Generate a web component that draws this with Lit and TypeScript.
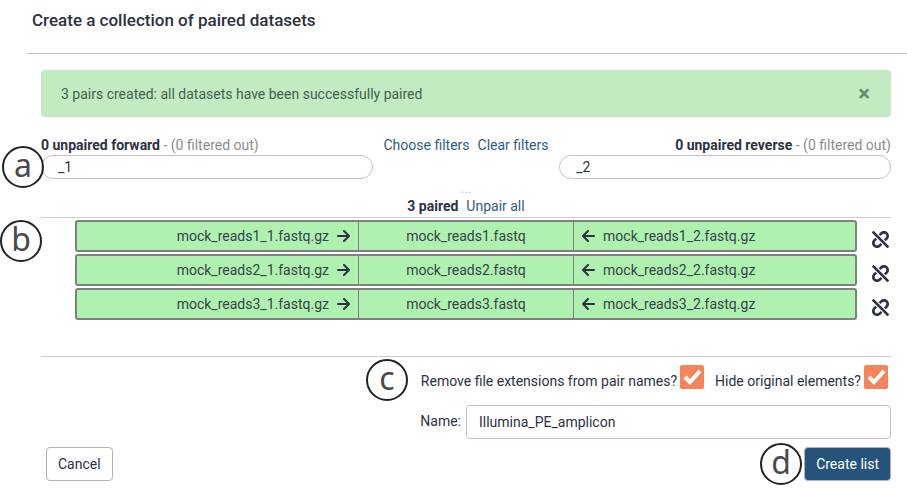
import { LitElement, html, css } from "lit";
import { customElement, property, state } from "lit/decorators.js";

const unlinkPath =
  "M304.083 405.907c4.686 4.686 4.686 12.284 0 16.971l-44.674 44.674c-59.263 59.262-155.693 59.266-214.961 0-59.264-59.265-59.264-155.696 0-214.96l44.675-44.675c4.686-4.686 12.284-4.686 16.971 0l39.598 39.598c4.686 4.686 4.686 12.284 0 16.971l-44.675 44.674c-28.072 28.073-28.072 73.75 0 101.823 28.072 28.072 73.75 28.073 101.824 0l44.674-44.674c4.686-4.686 12.284-4.686 16.971 0l39.597 39.598zm-56.568-260.216c4.686 4.686 12.284 4.686 16.971 0l44.674-44.674c28.072-28.075 73.75-28.073 101.824 0 28.072 28.073 28.072 73.75 0 101.823l-44.675 44.674c-4.686 4.686-4.686 12.284 0 16.971l39.598 39.598c4.686 4.686 12.284 4.686 16.971 0l44.675-44.675c59.263-59.265 59.263-155.695 0-214.961-59.266-59.264-155.695-59.264-214.961 0l-44.674 44.674c-4.686 4.686-4.686 12.284 0 16.971l39.597 39.599zm234.828 359.28l22.627-22.627c9.373-9.373 9.373-24.569 0-33.941L63.598 7.029c-9.373-9.373-24.569-9.373-33.941 0L7.029 29.657c-9.373 9.373-9.373 24.569 0 33.941l441.373 441.373c9.373 9.372 24.569 9.372 33.941 0z";

/** Round lettered marker that sits over the form. */
@customElement("step-marker")
class StepMarker extends LitElement {
  static styles = css`
    :host {
      display: grid;
      place-items: center;
      box-sizing: border-box;
      width: 42px;
      height: 42px;
      padding-bottom: 4px;
      border: 2px solid #222;
      border-radius: 50%;
      color: #4a4a4a;
      font: 32px/34px "Noto Sans", sans-serif;
    }
  `;
  render() {
    return html`<slot></slot>`;
  }
}

@customElement("pair-row")
class PairRow extends LitElement {
  @property() name = "";

  static styles = css`
    :host {
      display: flex;
      align-items: center;
      gap: 15px;
    }
    .pair {
      flex: 1;
      display: grid;
      grid-template-columns: 13fr 10fr 13fr;
      box-sizing: border-box;
      height: 32px;
      border: 2px solid #808080;
      border-radius: 3px;
      background: #aff1af;
      color: #37424c;
      line-height: 28px;
    }
    .cell {
      display: flex;
      align-items: center;
      gap: 8px;
      padding: 0 8px;
    }
    .forward {
      justify-content: flex-end;
    }
    .middle {
      justify-content: center;
      border: solid #808080;
      border-width: 0 1px;
    }
    .arrow {
      width: 13px;
      height: 12px;
      fill: none;
      stroke: #2c3143;
      stroke-width: 2;
      stroke-linecap: round;
      stroke-linejoin: round;
    }
    .unlink {
      width: 17px;
      height: 17px;
      padding: 0;
      margin-top: 6px;
      border: 0;
      background: none;
      color: #2c3143;
    }
    .unlink svg {
      display: block;
      fill: currentColor;
    }
  `;

  render() {
    return html`
      <div class="pair">
        <span class="cell forward">
          ${this.name}_1.fastq.gz
          <svg class="arrow" viewBox="0 0 13 12"><path d="M1 6H12M7 1L12 6L7 11" /></svg>
        </span>
        <span class="cell middle">${this.name}.fastq</span>
        <span class="cell">
          <svg class="arrow" viewBox="0 0 13 12"><path d="M12 6H1M6 1L1 6L6 11" /></svg>
          ${this.name}_2.fastq.gz
        </span>
      </div>
      <button class="unlink" aria-label="Unpair">
        <svg width="17" height="17" viewBox="0 0 512 512"><path d=${unlinkPath} /></svg>
      </button>
    `;
  }
}

@customElement("app-root")
class AppRoot extends LitElement {
  @state() private pairs = ["mock_reads1", "mock_reads2", "mock_reads3"];

  static styles = css`
    :host {
      display: block;
      background: #fff;
      color: #2c3143;
      font: 14px/20px Roboto, sans-serif;
    }
    input,
    button {
      font: inherit;
      color: inherit;
      box-sizing: border-box;
    }
    a {
      color: #2f5c85;
      text-decoration: none;
    }
    .header {
      margin-left: 27px;
      padding: 8px 5px 21px;
      border-bottom: 1px solid #bdc0d0;
    }
    .title {
      margin: 0;
      font-size: 17px;
      line-height: 24px;
      font-weight: 500;
    }
    .body {
      padding: 16px 16px 18px 41px;
    }
    .alert {
      display: flex;
      align-items: center;
      justify-content: space-between;
      height: 47px;
      padding: 0 21px 0 20px;
      border-radius: 4px;
      background: #c2ebc2;
      color: #46604f;
    }
    .close {
      padding: 0;
      border: 0;
      background: none;
      font-size: 22px;
      font-weight: 700;
      opacity: 0.7;
    }
    .filters {
      position: relative;
      display: grid;
      grid-template-columns: 16fr 9fr 16fr;
      margin-top: 18px;
    }
    .reverse {
      text-align: right;
    }
    .muted {
      color: #8c8c8c;
    }
    .links {
      display: flex;
      justify-content: center;
      gap: 8px;
      white-space: nowrap;
    }
    .filter {
      display: block;
      width: 100%;
      height: 24px;
      padding: 0 16px;
      border: 1px solid #bdc0d8;
      border-radius: 12px;
      background: #fff;
    }
    .grip {
      height: 17px;
      color: #bbb;
      font-size: 14px;
      line-height: 18px;
      text-align: center;
    }
    .paired {
      display: flex;
      justify-content: center;
      gap: 8px;
      padding-bottom: 1px;
      border-bottom: 1px solid #ccc;
    }
    .list {
      position: relative;
      display: grid;
      gap: 2px;
      padding: 2px 2px 36px 34px;
      border-bottom: 1px solid #ccc;
    }
    .options {
      position: relative;
      display: flex;
      justify-content: flex-end;
      gap: 11px;
      padding: 8px 3px 0 0;
    }
    .option {
      display: flex;
      gap: 3px;
      line-height: 32px;
    }
    .box {
      display: grid;
      width: 24px;
      height: 24px;
    }
    .check,
    .tick {
      grid-area: 1 / 1;
      width: 24px;
      height: 24px;
      margin: 0;
    }
    .check {
      appearance: none;
      border-radius: 2px;
    }
    .check:checked {
      background: #f4845b;
    }
    .tick {
      fill: none;
      stroke: #fff;
      stroke-width: 4;
      pointer-events: none;
    }
    .naming {
      display: flex;
      justify-content: flex-end;
      gap: 5px;
      margin-top: 8px;
      line-height: 32px;
    }
    .name {
      width: 50%;
      height: 34px;
      padding: 0 12px;
      border: 1px solid #bdc0d8;
      border-radius: 4px;
      background: #fff;
    }
    .actions {
      position: relative;
      display: flex;
      justify-content: space-between;
      margin-top: 8px;
      padding-left: 5px;
    }
    .button {
      height: 34px;
      padding: 0 11px;
      border: 1px solid #b0b0b5;
      border-radius: 4px;
      background: #fff;
    }
    .primary {
      background: #25537b;
      color: #fff;
    }
    step-marker {
      position: absolute;
    }
    .mark-a {
      left: -39px;
      top: 11px;
    }
    .mark-b {
      left: -41px;
      top: 2px;
    }
    .mark-c {
      right: 483px;
      top: 2px;
    }
    .mark-d {
      right: 89px;
      top: -4px;
    }
  `;

  private renderCheck(id: string, label: string) {
    return html`<div class="option">
      <label for=${id}>${label}</label>
      <span class="box">
        <input class="check" type="checkbox" id=${id} checked />
        <svg class="tick" viewBox="0 0 24 24"><path d="M5 12L10 17L20 6" /></svg>
      </span>
    </div>`;
  }

  render() {
    return html`
      <header class="header"><h1 class="title">Create a collection of paired datasets</h1></header>
      <main class="body">
        <div class="alert" role="alert">
          <span>3 pairs created: all datasets have been successfully paired</span>
          <button class="close" aria-label="Close">×</button>
        </div>
        <section class="filters">
          <div>
            <label for="forward"><b>0 unpaired forward</b> <span class="muted">- (0 filtered out)</span></label>
            <input class="filter" id="forward" value="_1" />
          </div>
          <div class="links"><a href="#">Choose filters</a><a href="#">Clear filters</a></div>
          <div class="reverse">
            <label for="reverse"><b>0 unpaired reverse</b> <span class="muted">- (0 filtered out)</span></label>
            <input class="filter" id="reverse" value="_2" />
          </div>
          <step-marker class="mark-a">a</step-marker>
        </section>
        <div class="grip">...</div>
        <div class="paired"><b>3 paired</b><a href="#">Unpair all</a></div>
        <section class="list">
          ${this.pairs.map((name) => html`<pair-row name=${name}></pair-row>`)}
          <step-marker class="mark-b">b</step-marker>
        </section>
        <div class="options">
          ${this.renderCheck("extensions", "Remove file extensions from pair names?")}
          ${this.renderCheck("hide", "Hide original elements?")}
          <step-marker class="mark-c">c</step-marker>
        </div>
        <div class="naming">
          <label for="name">Name:</label>
          <input class="name" id="name" value="Illumina_PE_amplicon" />
        </div>
        <div class="actions">
          <button class="button">Cancel</button>
          <button class="button primary">Create list</button>
          <step-marker class="mark-d">d</step-marker>
        </div>
      </main>
    `;
  }
}
